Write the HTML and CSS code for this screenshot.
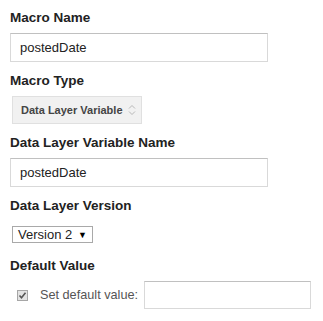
FILE: index.html
```html
<!DOCTYPE html>
<html>
<head>
  <link rel="stylesheet" href="styles.css">
</head>
<body>
  <form class="macro-form">
    <div class="field">
      <label class="field-label" for="macro-name">Macro Name</label>
      <input type="text" id="macro-name" class="text-input" value="postedDate">
    </div>

    <div class="field">
      <label class="field-label">Macro Type</label>
      <div class="type-select">
        <span>Data Layer Variable</span>
        <svg class="updown" width="8" height="12" viewBox="0 0 8 12">
          <path d="M1 4.5 L4 1.5 L7 4.5" fill="none" stroke="#b8b8b8" stroke-width="1"/>
          <path d="M1 7.5 L4 10.5 L7 7.5" fill="none" stroke="#b8b8b8" stroke-width="1"/>
        </svg>
      </div>
    </div>

    <div class="field">
      <label class="field-label" for="var-name">Data Layer Variable Name</label>
      <input type="text" id="var-name" class="text-input" value="postedDate">
    </div>

    <div class="field version-field">
      <label class="field-label">Data Layer Version</label>
      <div class="version-select">
        <span>Version 2</span>
        <span class="arrow">&#9660;</span>
      </div>
    </div>

    <div class="field">
      <label class="field-label">Default Value</label>
      <div class="default-row">
        <span class="check">
          <svg width="9" height="9" viewBox="0 0 9 9">
            <path d="M1.5 4.5 L3.5 6.8 L7.5 1.8" fill="none" stroke="#555" stroke-width="1.6"/>
          </svg>
        </span>
        <span class="default-text">Set default value:</span>
        <input type="text" class="text-input default-input">
      </div>
    </div>
  </form>
</body>
</html>
```

FILE: styles.css
```css
body {
  margin: 0;
  padding: 10px 0 0 10px;
  background-color: #ffffff;
  font-family: Arial, "Liberation Sans", sans-serif;
  color: #222222;
}

.field {
  margin-bottom: 11px;
}

.field-label {
  display: block;
  font-size: 13.5px;
  font-weight: bold;
  line-height: 15px;
  color: #222222;
  margin-bottom: 8px;
}

.version-field {
  margin-bottom: 15px;
}

.version-field .field-label {
  margin-bottom: 12px;
}

.text-input {
  box-sizing: border-box;
  width: 258px;
  height: 29px;
  margin: 0;
  padding: 0 9px;
  border: 1px solid #d9d9d9;
  border-top-color: #c0c0c0;
  font-family: Arial, "Liberation Sans", sans-serif;
  font-size: 13px;
  color: #222222;
  outline: none;
}

.type-select {
  box-sizing: border-box;
  display: flex;
  align-items: center;
  justify-content: space-between;
  width: 130px;
  height: 28px;
  margin-left: 2px;
  padding: 0 5px 0 8px;
  background-color: #f1f1f1;
  border: 1px solid #e0e0e0;
  font-size: 11px;
  font-weight: bold;
  color: #444444;
}

.version-select {
  box-sizing: border-box;
  display: inline-flex;
  align-items: center;
  justify-content: space-between;
  width: 81px;
  height: 17px;
  margin-left: 2px;
  padding: 0 5px 0 5px;
  border: 1px solid #a9a9a9;
  font-size: 13px;
  color: #222222;
}

.version-select .arrow {
  font-size: 9px;
  color: #000000;
}

.default-row {
  display: flex;
  align-items: center;
  padding-left: 7px;
}

.check {
  box-sizing: border-box;
  display: flex;
  align-items: center;
  justify-content: center;
  width: 11px;
  height: 11px;
  border: 1px solid #a6a6a6;
  background-color: #e3e3e3;
}

.default-text {
  margin-left: 12px;
  font-size: 12.7px;
  color: #555555;
}

.default-input {
  width: 167px;
  height: 28px;
  margin-left: 6px;
}
```
